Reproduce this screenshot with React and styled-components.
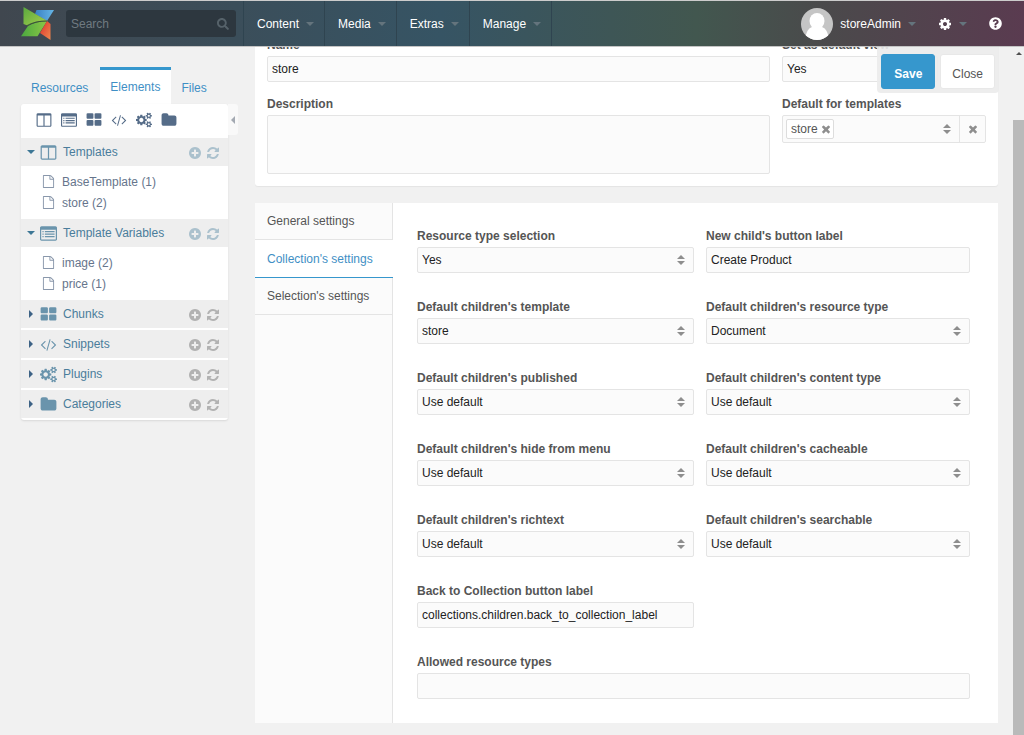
import React, { useState } from "react";
import styled, { createGlobalStyle } from "styled-components";
import { FaQuestionCircle, FaSearch } from "react-icons/fa";

const GlobalStyle = createGlobalStyle`
  * {
    box-sizing: border-box;
  }
  body {
    margin: 0;
    background: #f1f1f1;
    color: #555;
    font: 12px/16px "Liberation Sans", Arial, sans-serif;
  }
  button, input, select, textarea {
    font: inherit;
  }
`;

/**
 * Icons, most of them on a 1792 unit grid.
 */

const viewBoxes = {
  columns: "0 0 1664 1792",
  code: "0 0 2048 1792",
  cogs: "0 0 1920 1792"
};

const paths = {
  columns:
    "M160 1536h608v-1152h-640v1120q0 13 9.5 22.5t22.5 9.5zm1376-32v-1120h-640v1152h608q13 0 22.5-9.5t9.5-22.5zm128-1216v1216q0 66-47 113t-113 47h-1344q-66 0-113-47t-47-113v-1216q0-66 47-113t113-47h1344q66 0 113 47t47 113z",
  list:
    "M160 128h1472q66 0 113 47t47 113v1216q0 66-47 113t-113 47h-1472q-66 0-113-47t-47-113v-1216q0-66 47-113t113-47zM128 512v992q0 32 32 32h1472q32 0 32-32v-992zM256 640h128v128h-128zM512 640h1024v128h-1024zM256 896h128v128h-128zM512 896h1024v128h-1024zM256 1152h128v128h-128zM512 1152h1024v128h-1024z",
  blocks:
    "M832 1024v384q0 52-38 90t-90 38h-512q-52 0-90-38t-38-90v-384q0-52 38-90t90-38h512q52 0 90 38t38 90zm0-768v384q0 52-38 90t-90 38h-512q-52 0-90-38t-38-90v-384q0-52 38-90t90-38h512q52 0 90 38t38 90zm896 768v384q0 52-38 90t-90 38h-512q-52 0-90-38t-38-90v-384q0-52 38-90t90-38h512q52 0 90 38t38 90zm0-768v384q0 52-38 90t-90 38h-512q-52 0-90-38t-38-90v-384q0-52 38-90t90-38h512q52 0 90 38t38 90z",
  code:
    "M681 1399l-50 50q-10 10-23 10t-23-10l-466-466q-10-10-10-23t10-23l466-466q10-10 23-10t23 10l50 50q10 10 10 23t-10 23l-393 393 393 393q10 10 10 23t-10 23zm591-1067l-373 1291q-4 13-15.5 19.5t-23.5 2.5l-62-17q-13-4-19.5-15.5t-2.5-24.5l373-1291q4-13 15.5-19.5t23.5-2.5l62 17q13 4 19.5 15.5t2.5 24.5zm657 651l-466 466q-10 10-23 10t-23-10l-50-50q-10-10-10-23t10-23l393-393-393-393q-10-10-10-23t10-23l50-50q10-10 23-10t23 10l466 466q10 10 10 23t-10 23z",
  cogs:
    "M896 896q0-106-75-181t-181-75-181 75-75 181 75 181 181 75 181-75 75-181zm768 512q0-52-38-90t-90-38-90 38-38 90q0 53 37.5 90.5t90.5 37.5 90.5-37.5 37.5-90.5zm0-1024q0-52-38-90t-90-38-90 38-38 90q0 53 37.5 90.5t90.5 37.5 90.5-37.5 37.5-90.5zm-384 421v185q0 10-7 19.5t-16 10.5l-155 24q-11 35-32 76 34 48 90 115 7 11 7 20 0 12-7 19-23 30-82.5 89.5t-78.5 59.5q-11 0-21-7l-115-90q-37 19-77 31-11 108-23 155-7 24-30 24h-186q-11 0-20-7.5t-10-17.5l-23-153q-34-10-75-31l-118 89q-7 7-20 7-11 0-21-8-144-133-144-160 0-9 7-19 10-14 41-53t47-61q-23-44-35-82l-152-24q-10-1-17-9.5t-7-19.5v-185q0-10 7-19.5t16-10.5l155-24q11-35 32-76-34-48-90-115-7-11-7-20 0-12 7-20 22-30 82-89t79-59q11 0 21 7l115 90q34-18 77-32 11-108 23-154 7-24 30-24h186q11 0 20 7.5t10 17.5l23 153q34 10 75 31l118-89q8-7 20-7 11 0 21 8 144 133 144 160 0 8-7 19-12 16-42 54t-45 60q23 48 34 82l152 23q10 2 17 10.5t7 19.5zm640 533v140q0 16-149 31-12 27-30 52 51 113 51 138 0 4-4 7-122 71-124 71-8 0-46-47t-52-68q-20 2-30 2t-30-2q-14 21-52 68t-46 47q-2 0-124-71-4-3-4-7 0-25 51-138-18-25-30-52-149-15-149-31v-140q0-16 149-31 13-29 30-52-51-113-51-138 0-4 4-7 4-2 35-20t59-34 30-16q8 0 46 46.5t52 67.5q20-2 30-2t30 2q51-71 92-112l6-2q4 0 124 70 4 3 4 7 0 25-51 138 17 23 30 52 149 15 149 31zm0-1024v140q0 16-149 31-12 27-30 52 51 113 51 138 0 4-4 7-122 71-124 71-8 0-46-47t-52-68q-20 2-30 2t-30-2q-14 21-52 68t-46 47q-2 0-124-71-4-3-4-7 0-25 51-138-18-25-30-52-149-15-149-31v-140q0-16 149-31 13-29 30-52-51-113-51-138 0-4 4-7 4-2 35-20t59-34 30-16q8 0 46 46.5t52 67.5q20-2 30-2t30 2q51-71 92-112l6-2q4 0 124 70 4 3 4 7 0 25-51 138 17 23 30 52 149 15 149 31z",
  folder:
    "M1728 608v704q0 92-66 158t-158 66h-1216q-92 0-158-66t-66-158v-960q0-92 66-158t158-66h320q92 0 158 66t66 158v32h672q92 0 158 66t66 158z",
  file:
    "M1596 380q28 28 48 76t20 88v1152q0 40-28 68t-68 28h-1344q-40 0-68-28t-28-68v-1600q0-40 28-68t68-28h896q40 0 88 20t76 48zm-444-244v376h376q-10-29-22-41l-313-313q-12-12-41-22zm384 1528v-1024h-416q-40 0-68-28t-28-68v-416h-768v1536h1280z",
  plus:
    "M1344 960v-128q0-26-19-45t-45-19h-256v-256q0-26-19-45t-45-19h-128q-26 0-45 19t-19 45v256h-256q-26 0-45 19t-19 45v128q0 26 19 45t45 19h256v256q0 26 19 45t45 19h128q26 0 45-19t19-45v-256h256q26 0 45-19t19-45zm320-64q0 209-103 385.5t-279.5 279.5-385.5 103-385.5-103-279.5-279.5-103-385.5 103-385.5 279.5-279.5 385.5-103 385.5 103 279.5 279.5 103 385.5z",
  refresh:
    "M1639 1056q0 5-1 7-64 268-268 434.5t-478 166.5q-146 0-282.5-55t-243.5-157l-129 129q-19 19-45 19t-45-19-19-45v-448q0-26 19-45t45-19h448q26 0 45 19t19 45-19 45l-137 137q71 66 161 102t187 36q134 0 250-65t186-179q11-17 53-117 8-23 30-23h192q13 0 22.5 9.5t9.5 22.5zm25-800v448q0 26-19 45t-45 19h-448q-26 0-45-19t-19-45 19-45l138-138q-148-137-349-137-134 0-250 65t-186 179q-11 17-53 117-8 23-30 23h-199q-13 0-22.5-9.5t-9.5-22.5v-7q65-268 270-434.5t480-166.5q146 0 284 55.5t245 156.5l130-129q19-19 45-19t45 19 19 45z",
  times:
    "M1490 1322q0 40-28 68l-136 136q-28 28-68 28t-68-28l-294-294-294 294q-28 28-68 28t-68-28l-136-136q-28-28-28-68t28-68l294-294-294-294q-28-28-28-68t28-68l136-136q28-28 68-28t68 28l294 294 294-294q28-28 68-28t68 28l136 136q28 28 28 68t-28 68l-294 294 294 294q28 28 28 68z",
  cog:
    "M1152 896q0-106-75-181t-181-75-181 75-75 181 75 181 181 75 181-75 75-181zm512-109v222q0 12-8 23t-20 13l-185 28q-19 54-39 91 35 50 107 138 10 12 10 25t-9 23q-27 37-99 108t-94 71q-12 0-26-9l-138-108q-44 23-91 38-16 136-29 186-7 28-36 28h-222q-14 0-24.5-8.5t-11.5-21.5l-28-184q-49-16-90-37l-141 107q-10 9-25 9-14 0-25-11-126-114-165-168-7-10-7-23 0-12 8-23 15-21 51-66.5t54-70.5q-27-50-41-99l-183-27q-13-2-21-12.5t-8-23.5v-222q0-12 8-23t19-13l186-28q14-46 39-92-40-57-107-138-10-12-10-24 0-10 9-23 26-36 98.5-107.5t94.5-71.5q13 0 26 10l138 107q44-23 91-38 16-136 29-186 7-28 36-28h222q14 0 24.5 8.5t11.5 21.5l28 184q49 16 90 37l142-107q9-9 24-9 13 0 25 10 129 119 165 170 7 8 7 22 0 12-8 23-15 21-51 66.5t-54 70.5q26 50 41 98l183 28q13 2 21 12.5t8 23.5z"
};

const Icon = ({ name, size = 16 }) => (
  <svg
    width={size}
    height={size}
    viewBox={viewBoxes[name] || "0 0 1792 1792"}
    fill="currentColor"
    fillRule="evenodd"
    aria-hidden="true"
  >
    <path d={paths[name]} />
  </svg>
);

const Caret = styled.span`
  flex: none;
  width: 0;
  height: 0;
  border: 4px solid transparent;
  border-top-color: #64747d;
  border-bottom-width: 0;
`;

const PlainButton = styled.button`
  display: flex;
  align-items: center;
  padding: 0;
  border: 0;
  background: none;
  color: inherit;
  cursor: pointer;
`;

/**
 * Top bar.
 */

const Page = styled.div`
  display: flex;
  flex-direction: column;
  height: 100vh;
  overflow: hidden;
`;

const TopBar = styled.header`
  display: flex;
  align-items: center;
  flex: none;
  height: 47px;
  padding-left: 21px;
  border-top: 1px solid #ccc;
  border-bottom: 1px solid #c4c4c4;
  background: linear-gradient(
    90deg,
    #40474f 0%,
    #3b4e5a 23%,
    #365464 43%,
    #42574f 68%,
    #4a4a4b 80%,
    #5a3b50 100%
  );
  color: #fff;
`;

const SearchBox = styled.label`
  display: flex;
  align-items: center;
  width: 170px;
  height: 27px;
  margin: 0 7px 0 11px;
  padding: 0 7px 0 5px;
  border-radius: 3px;
  background: #2d373f;
  color: #56626a;
`;

const SearchInput = styled.input`
  flex: 1;
  min-width: 0;
  padding: 0;
  border: 0;
  outline: 0;
  background: none;
  color: #fff;

  &::placeholder {
    color: #707a81;
    opacity: 1;
  }
`;

const Menu = styled.nav`
  display: flex;
  height: 100%;
  border-left: 1px solid #2f4450;
`;

const MenuItem = styled(PlainButton)`
  gap: 7px;
  padding: 0 10px 0 13px;
  border-right: 1px solid #2f4450;
`;

const UserArea = styled.div`
  display: flex;
  align-items: center;
  gap: 22px;
  margin-left: auto;
  padding-right: 22px;
`;

const UserButton = styled(PlainButton)`
  gap: 7px;
`;

const Logo = () => (
  <svg width="34" height="34" viewBox="0 0 34 34" role="img" aria-label="MODX">
    <defs>
      <linearGradient id="green" x1="0" y1="0" x2="1" y2="1">
        <stop offset="0" stopColor="#5aa83f" />
        <stop offset="1" stopColor="#a5cf4c" />
      </linearGradient>
      <linearGradient id="greenLow" x1="0" y1="0" x2="1" y2="0">
        <stop offset="0" stopColor="#4ba83f" />
        <stop offset="1" stopColor="#8bc646" />
      </linearGradient>
      <linearGradient id="blue" x1="0" y1="0" x2="1" y2="0">
        <stop offset="0" stopColor="#3a80c4" />
        <stop offset="1" stopColor="#66b6e6" />
      </linearGradient>
      <linearGradient id="red" x1="0" y1="0" x2="1" y2="1">
        <stop offset="0" stopColor="#dc2f2b" />
        <stop offset="1" stopColor="#ee8a4e" />
      </linearGradient>
    </defs>
    <path d="M15.5 3H33L26 14L14 7Z" fill="url(#blue)" />
    <path d="M2.5 0L26 13.7Q14 13.5 6.5 18.5L2.5 17Z" fill="url(#green)" />
    <path d="M7 19Q15 14.5 26 14.3L16.5 29.3H0Z" fill="url(#greenLow)" />
    <path d="M26 14L29.5 17V33L19 26Z" fill="url(#red)" />
    <path
      d="M5.5 18.8Q14 13.8 26 14"
      fill="none"
      stroke="#33502f"
      strokeWidth="0.8"
    />
  </svg>
);

const Avatar = () => (
  <svg width="32" height="32" viewBox="0 0 32 32" aria-hidden="true">
    <clipPath id="round">
      <circle cx="16" cy="16" r="16" />
    </clipPath>
    <g clipPath="url(#round)">
      <rect width="32" height="32" fill="#c5c5c5" />
      <ellipse cx="16" cy="13" rx="7.5" ry="8" fill="#fff" />
      <path d="M4 32Q5 21 11 19H21Q27 21 28 32Z" fill="#fff" />
    </g>
  </svg>
);

/**
 * Element tree.
 */

const Body = styled.div`
  display: flex;
  flex: 1;
  min-height: 0;
`;

const Sidebar = styled.aside`
  flex: none;
  width: 255px;
  padding: 20px 0 0 21px;
`;

const Tabs = styled.div`
  display: flex;
  height: 37px;
`;

const Tab = styled(PlainButton)`
  padding: ${props => (props.$active ? "0 11px 0 10px" : "2px 12px 0 10px")};
  border-top: 3px solid ${props => (props.$active ? "#3697cd" : "transparent")};
  background: ${props => (props.$active ? "#fff" : "none")};
  color: #3f8fc5;
`;

const TreeRow = styled.div`
  display: flex;
  align-items: flex-start;
`;

const Tree = styled.div`
  width: 207px;
  border-radius: 3px;
  background: #fff;
  box-shadow: 0 1px 2px #d8d8d8;
`;

const CollapseButton = styled(PlainButton)`
  justify-content: center;
  width: 10px;
  height: 31px;
  border-radius: 0 3px 3px 0;
  background: #f9f9f9;
`;

const ArrowLeft = styled.span`
  border: 4px solid transparent;
  border-left-width: 0;
  border-right-color: #a3a9b2;
`;

const Tools = styled.div`
  display: flex;
  align-items: center;
  gap: 9px;
  height: 34px;
  padding: 0 0 2px 15px;
  color: #556c88;
`;

const Group = styled.div`
  display: flex;
  align-items: center;
  height: 28px;
  padding: 0 8px 0 6px;
  background: #eee;
  color: #4a7d9b;
`;

const GroupToggle = styled(PlainButton)`
  flex: 1;
  gap: 5px;
`;

const Arrow = styled.span`
  width: 0;
  height: 0;
  margin: 0 ${props => (props.$open ? 0 : 2)}px;
  border-style: solid;
  border-color: ${props =>
    props.$open
      ? "#3d7795 transparent transparent"
      : "transparent transparent transparent #3d6285"};
  border-width: ${props => (props.$open ? "4px 4px 0" : "4px 0 4px 4px")};
`;

const GroupIcon = styled.span`
  display: flex;
  width: 18px;
  color: #6a94ac;
`;

const GroupActions = styled.span`
  display: flex;
  gap: 4px;
  padding-top: 2px;
  color: ${props => (props.$open ? "#abc1cd" : "#b2b2b2")};
`;

const Leaves = styled.div`
  padding: 5px 0 6px;
`;

const Leaf = styled.a`
  display: flex;
  align-items: center;
  gap: 7px;
  height: 21px;
  padding-left: 21px;
  color: #66758c;
  text-decoration: none;

  svg {
    color: #8997ab;
  }
`;

const Divider = styled.div`
  height: 2px;
`;

const groups = [
  { name: "Templates", icon: "columns", leaves: ["BaseTemplate (1)", "store (2)"] },
  { name: "Template Variables", icon: "list", leaves: ["image (2)", "price (1)"] },
  { name: "Chunks", icon: "blocks" },
  { name: "Snippets", icon: "code" },
  { name: "Plugins", icon: "cogs" },
  { name: "Categories", icon: "folder" }
];

const TreeGroup = ({ group }) => {
  const { name, icon, leaves } = group;
  const [open, setOpen] = useState(!!leaves);
  return (
    <>
      <Group>
        <GroupToggle aria-expanded={open} onClick={() => setOpen(!open)}>
          <Arrow $open={open} />
          <GroupIcon>
            <Icon name={icon} size={17} />
          </GroupIcon>
          {name}
        </GroupToggle>
        <GroupActions $open={open}>
          <PlainButton aria-label={`Add to ${name}`}>
            <Icon name="plus" size={14} />
          </PlainButton>
          <PlainButton aria-label={`Refresh ${name}`}>
            <Icon name="refresh" size={14} />
          </PlainButton>
        </GroupActions>
      </Group>
      {open && leaves ? (
        <Leaves>
          {leaves.map(leaf => (
            <Leaf key={leaf} href="#">
              <Icon name="file" size={13} />
              {leaf}
            </Leaf>
          ))}
        </Leaves>
      ) : (
        <Divider />
      )}
    </>
  );
};

/**
 * Form.
 */

const Content = styled.main`
  position: relative;
  flex: 1;
  min-width: 0;
  padding-right: 15px;
  overflow: hidden;
`;

const Summary = styled.section`
  display: grid;
  grid-template-columns: 503fr 204fr;
  gap: 14px 12px;
  align-items: start;
  margin: -10px 0 17px;
  padding: 0 12px 12px;
  border-radius: 3px;
  background: #fff;
  box-shadow: 0 1px 1px #e4e4e4;
`;

const Settings = styled.section`
  display: flex;
  background: #fff;
`;

const SideTabs = styled.div`
  flex: none;
  width: 138px;
  border-right: 1px solid #e4e4e4;
  background: #fbfbfb;
`;

const SideTab = styled(PlainButton)`
  width: ${props => (props.$active ? "138px" : "100%")};
  height: ${props => (props.$active ? 38 : 37)}px;
  padding: 0 12px;
  border-bottom: 1px solid ${props => (props.$active ? "#3697cd" : "#e4e4e4")};
  background: ${props => (props.$active ? "#fff" : "none")};
  color: ${props => (props.$active ? "#3f8fc5" : "#555")};
`;

const Fields = styled.div`
  display: grid;
  flex: 1;
  grid-template-columns: 277fr 264fr;
  gap: 26px 12px;
  padding: 25px 28px 24px 24px;
`;

const Cell = styled.div`
  grid-column: ${props => (props.$wide ? "1 / -1" : "auto")};
  min-width: 0;
`;

const Label = styled.label`
  display: block;
  margin-bottom: 3px;
  font-weight: bold;
`;

const Input = styled.input`
  display: block;
  width: 100%;
  height: 26px;
  padding: 0 4px;
  border: 1px solid #e4e4e4;
  border-radius: 2px;
  outline: 0;
  background: #fbfbfb;
  color: #222;
`;

const TextArea = styled(Input)`
  height: 59px;
  padding: 4px;
  resize: none;
`;

const Select = styled(Input)`
  appearance: none;
`;

const SelectWrap = styled.div`
  position: relative;
  width: ${props => (props.$short ? "156px" : "auto")};
`;

const SortMark = styled.span`
  position: absolute;
  top: 50%;
  right: 8px;
  transform: translateY(-50%);
  display: flex;
  pointer-events: none;
  color: #8e8e8e;
`;

const TagBox = styled.div`
  display: flex;
  height: 28px;
  border: 1px solid #e4e4e4;
  border-radius: 2px;
  background: #fbfbfb;
  color: #8e8e8e;
`;

const TagList = styled.div`
  display: flex;
  align-items: center;
  flex: 1;
  padding: 0 7px 0 3px;
`;

const Tag = styled.span`
  display: flex;
  align-items: center;
  gap: 2px;
  height: 20px;
  margin-right: auto;
  padding: 0 1px 0 4px;
  border: 1px solid #ddd;
  border-radius: 2px;
  background: #fff;
  color: #555;

  button {
    color: #8e8e8e;
  }
`;

const ClearButton = styled(PlainButton)`
  justify-content: center;
  width: 26px;
  border-left: 1px solid #e4e4e4;
`;

const Actions = styled.div`
  position: absolute;
  top: 0;
  right: 14px;
  z-index: 1;
  display: flex;
  gap: 5px;
  padding: 7px 4px 4px;
  border-radius: 0 0 4px 4px;
  background: rgba(235, 235, 235, 0.9);
`;

const ActionButton = styled.button`
  min-width: 54px;
  height: 35px;
  padding: 4px 11px 0;
  border: 1px solid ${props => (props.$primary ? "#3697cd" : "#e8e8e8")};
  border-radius: 3px;
  background: ${props => (props.$primary ? "#3697cd" : "#fff")};
  color: ${props => (props.$primary ? "#fff" : "#555")};
  font-weight: ${props => (props.$primary ? "bold" : "normal")};
  cursor: pointer;
`;

const Sort = () => (
  <svg width="10" height="10" viewBox="0 0 10 10" aria-hidden="true">
    <path d="M1 4L5 0L9 4ZM1 6H9L5 10Z" fill="currentColor" />
  </svg>
);

const Track = styled.div`
  flex: none;
  display: flex;
  flex-direction: column;
  align-items: center;
  width: 11px;
  padding-top: 5px;
`;

const ArrowUp = styled.span`
  border: 3px solid transparent;
  border-top-width: 0;
  border-bottom-color: #505050;
`;

const Thumb = styled.div`
  flex: 1;
  width: 100%;
  margin-top: 65px;
  background: #bababa;
`;

const SelectField = ({ id, label, value, short }) => (
  <Cell>
    <Label htmlFor={id}>{label}</Label>
    <SelectWrap $short={short}>
      <Select as="select" id={id} defaultValue={value}>
        <option>{value}</option>
      </Select>
      {!short && (
        <SortMark>
          <Sort />
        </SortMark>
      )}
    </SelectWrap>
  </Cell>
);

const TextField = ({ id, label, value = "", ...rest }) => (
  <Cell {...rest}>
    <Label htmlFor={id}>{label}</Label>
    <Input id={id} defaultValue={value} />
  </Cell>
);

const menu = ["Content", "Media", "Extras", "Manage"];
const tools = ["columns", "list", "blocks", "code", "cogs", "folder"];
const sideTabs = ["General settings", "Collection's settings", "Selection's settings"];

export default function App() {
  const [tab, setTab] = useState("Elements");
  const [sideTab, setSideTab] = useState(sideTabs[1]);

  return (
    <Page>
      <GlobalStyle />
      <TopBar>
        <Logo />
        <SearchBox>
          <SearchInput placeholder="Search" aria-label="Search" />
          <FaSearch size={12} />
        </SearchBox>
        <Menu>
          {menu.map(item => (
            <MenuItem key={item}>
              {item}
              <Caret />
            </MenuItem>
          ))}
        </Menu>
        <UserArea>
          <UserButton>
            <Avatar />
            storeAdmin
            <Caret />
          </UserButton>
          <UserButton aria-label="Settings">
            <Icon name="cog" size={14} />
            <Caret />
          </UserButton>
          <PlainButton aria-label="Help">
            <FaQuestionCircle size={13} />
          </PlainButton>
        </UserArea>
      </TopBar>
      <Body>
        <Sidebar>
          <Tabs>
            {["Resources", "Elements", "Files"].map(name => (
              <Tab key={name} $active={name === tab} onClick={() => setTab(name)}>
                {name}
              </Tab>
            ))}
          </Tabs>
          <TreeRow>
            <Tree>
              <Tools>
                {tools.map(tool => (
                  <PlainButton key={tool} aria-label={`New ${tool}`}>
                    <Icon name={tool} />
                  </PlainButton>
                ))}
              </Tools>
              {groups.map(group => (
                <TreeGroup key={group.name} group={group} />
              ))}
            </Tree>
            <CollapseButton aria-label="Collapse">
              <ArrowLeft />
            </CollapseButton>
          </TreeRow>
        </Sidebar>
        <Content>
          <Actions>
            <ActionButton $primary>Save</ActionButton>
            <ActionButton>Close</ActionButton>
          </Actions>
          <Summary>
            <TextField id="name" label="Name" value="store" />
            <SelectField id="default-view" label="Set as default view" value="Yes" short />
            <Cell>
              <Label htmlFor="description">Description</Label>
              <TextArea as="textarea" id="description" />
            </Cell>
            <Cell>
              <Label as="div">Default for templates</Label>
              <TagBox>
                <TagList>
                  <Tag>
                    store
                    <PlainButton aria-label="Remove store">
                      <Icon name="times" size={12} />
                    </PlainButton>
                  </Tag>
                  <Sort />
                </TagList>
                <ClearButton aria-label="Clear templates">
                  <Icon name="times" size={12} />
                </ClearButton>
              </TagBox>
            </Cell>
          </Summary>
          <Settings>
            <SideTabs>
              {sideTabs.map(name => (
                <SideTab
                  key={name}
                  $active={name === sideTab}
                  onClick={() => setSideTab(name)}
                >
                  {name}
                </SideTab>
              ))}
            </SideTabs>
            <Fields>
              <SelectField id="type-selection" label="Resource type selection" value="Yes" />
              <TextField id="new-child" label="New child's button label" value="Create Product" />
              <SelectField id="template" label="Default children's template" value="store" />
              <SelectField id="resource-type" label="Default children's resource type" value="Document" />
              <SelectField id="published" label="Default children's published" value="Use default" />
              <SelectField id="content-type" label="Default children's content type" value="Use default" />
              <SelectField id="hide-menu" label="Default children's hide from menu" value="Use default" />
              <SelectField id="cacheable" label="Default children's cacheable" value="Use default" />
              <SelectField id="richtext" label="Default children's richtext" value="Use default" />
              <SelectField id="searchable" label="Default children's searchable" value="Use default" />
              <TextField
                id="back-label"
                label="Back to Collection button label"
                value="collections.children.back_to_collection_label"
              />
              <TextField id="allowed" label="Allowed resource types" $wide />
            </Fields>
          </Settings>
        </Content>
        <Track>
          <ArrowUp />
          <Thumb />
        </Track>
      </Body>
    </Page>
  );
}
